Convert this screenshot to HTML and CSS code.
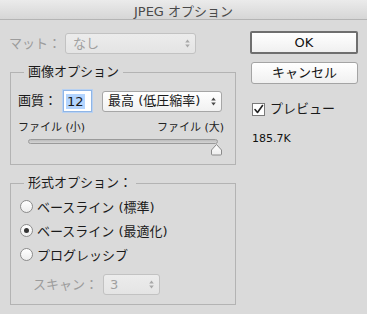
FILE: index.html
```html
<!DOCTYPE html>
<html lang="ja">
<head>
<meta charset="utf-8">
<title>JPEG オプション</title>
<link rel="stylesheet" href="styles.css">
</head>
<body>
<div class="window">
  <div class="titlebar">JPEG オプション</div>
  <div class="content">
    <div class="left">
      <div class="matte-row">
        <span class="lbl disabled">マット：</span>
        <div class="select disabled matte-select">
          <span>なし</span>
          <svg class="arrows" width="5" height="9" viewBox="0 0 5 9"><path d="M2.5 0.5 L4.8 3.5 H0.2 Z M2.5 8.5 L4.8 5.5 H0.2 Z"/></svg>
        </div>
      </div>

      <fieldset class="group g1">
        <legend>画像オプション</legend>
        <div class="quality-row">
          <span class="lbl q-lbl">画質：</span>
          <div class="num-input"><span class="sel">12</span></div>
          <div class="select q-select">
            <span>最高 (低圧縮率)</span>
            <svg class="arrows" width="5" height="9" viewBox="0 0 5 9"><path d="M2.5 0.5 L4.8 3.5 H0.2 Z M2.5 8.5 L4.8 5.5 H0.2 Z"/></svg>
          </div>
        </div>
        <div class="slider-labels"><span>ファイル (小)</span><span>ファイル (大)</span></div>
        <div class="slider">
          <div class="track"></div>
          <svg class="thumb" width="13" height="13" viewBox="0 0 13 13">
            <defs><linearGradient id="tg" x1="0" y1="0" x2="0" y2="1"><stop offset="0" stop-color="#ffffff"/><stop offset="1" stop-color="#ececec"/></linearGradient></defs>
            <path d="M1.5 11 V7 L6.5 1.5 L11.5 7 V11 Q11.5 12 10.5 12 H2.5 Q1.5 12 1.5 11 Z" fill="url(#tg)" stroke="#8a8a8a" stroke-width="1"/>
          </svg>
        </div>
      </fieldset>

      <fieldset class="group g2">
        <legend>形式オプション：</legend>
        <div class="radio-row"><span class="radio"></span><span>ベースライン (標準)</span></div>
        <div class="radio-row"><span class="radio on"></span><span>ベースライン (最適化)</span></div>
        <div class="radio-row"><span class="radio"></span><span>プログレッシブ</span></div>
        <div class="scan-row">
          <span class="lbl disabled">スキャン：</span>
          <div class="select disabled scan-select">
            <span>3</span>
            <svg class="arrows" width="5" height="9" viewBox="0 0 5 9"><path d="M2.5 0.5 L4.8 3.5 H0.2 Z M2.5 8.5 L4.8 5.5 H0.2 Z"/></svg>
          </div>
        </div>
      </fieldset>
    </div>

    <div class="right">
      <div class="btn ok">OK</div>
      <div class="btn cancel">キャンセル</div>
      <div class="check-row">
        <span class="checkbox">
          <svg width="11" height="11" viewBox="0 0 11 11"><path d="M2 5.5 L4.5 8.5 L9.5 1.5" fill="none" stroke="#222" stroke-width="1.6" stroke-linecap="round" stroke-linejoin="round"/></svg>
        </span>
        <span>プレビュー</span>
      </div>
      <div class="size">185.7K</div>
    </div>
  </div>
</div>
</body>
</html>
```

FILE: styles.css
```css
* { box-sizing: border-box; }
html, body {
  margin: 0;
  padding: 0;
  width: 367px;
  height: 314px;
  overflow: hidden;
  background: #dadada;
}
body {
  font-family: "DejaVu Sans", "Noto Sans CJK JP", sans-serif;
  font-size: 13px;
  color: #1a1a1a;
}
.window {
  width: 367px;
  height: 314px;
  display: flex;
  flex-direction: column;
  background: #dadada;
}
.titlebar {
  height: 20px;
  line-height: 23px;
  text-align: center;
  color: #4a4a4a;
  font-size: 13px;
  background: linear-gradient(#ebebeb, #d6d6d6);
  border-bottom: 1px solid #b4b4b4;
  flex: none;
}
.content {
  display: flex;
  flex: 1;
}
.left {
  width: 236px;
  padding-left: 9px;
  display: flex;
  flex-direction: column;
}
.right {
  width: 108px;
  margin-left: 14px;
  padding-top: 11px;
  display: flex;
  flex-direction: column;
}

.lbl { line-height: 16px; white-space: nowrap; }
.disabled { color: #9c9c9c; }

.matte-row {
  margin-top: 13px;
  display: flex;
  align-items: center;
  gap: 0;
}
.matte-row .lbl { width: 56px; }

.select {
  position: relative;
  height: 21px;
  border: 1px solid #a6a6a6;
  border-radius: 3px;
  background: linear-gradient(#ffffff, #f1f1f1);
  display: flex;
  align-items: center;
  padding-left: 5px;
  line-height: 16px;
  white-space: nowrap;
}
.select .arrows {
  position: absolute;
  right: 5px;
  top: 5px;
  fill: #4a4a4a;
}
.select.disabled {
  border-color: #c2c2c2;
  background: linear-gradient(#ececec, #e4e4e4);
  color: #a0a0a0;
}
.select.disabled .arrows { fill: #a8a8a8; }
.matte-select { width: 131px; padding-left: 7px; }

.group {
  margin: 10px 0 0 1px;
  width: 226px;
  padding: 0;
  border: 1px solid #b3b3b3;
  border-radius: 0;
  min-width: 0;
}
.group legend {
  margin-left: 13px;
  padding: 0 4px;
  line-height: 16px;
  font-size: 13px;
}

.quality-row {
  margin-top: 10px;
  padding-left: 7px;
  display: flex;
  align-items: center;
}
.q-lbl { width: 45px; }
.num-input {
  width: 29px;
  height: 22px;
  background: #fff;
  border: 1px solid #8fb5e6;
  box-shadow: 0 0 0 1px #b8d1f1;
  display: flex;
  align-items: center;
  padding-left: 2px;
}
.num-input .sel {
  background: #b4d5fe;
  line-height: 15px;
  padding: 0 1px;
}
.q-select {
  width: 120px;
  margin-left: 10px;
}

.slider-labels {
  margin-top: 9px;
  padding: 0 11px 0 7px;
  display: flex;
  justify-content: space-between;
  font-size: 11px;
  line-height: 14px;
  color: #222;
}
.slider {
  position: relative;
  margin-left: 17px;
  width: 195px;
  height: 18px;
}
.track {
  margin-top: 4px;
  width: 190px;
  height: 5px;
  border: 1px solid #9a9a9a;
  border-radius: 3px;
  background: linear-gradient(#bdbdbd, #d4d4d4);
}
.thumb {
  position: absolute;
  left: 182px;
  top: 4px;
}
.g1 { padding-bottom: 7px; }

.g2 { margin-top: 10px; padding-top: 3px; padding-bottom: 9px; }
.radio-row {
  height: 24px;
  display: flex;
  align-items: center;
  padding-left: 9px;
  gap: 4px;
  white-space: nowrap;
}
.radio {
  width: 13px;
  height: 13px;
  border-radius: 50%;
  border: 1px solid #8c8c8c;
  background: linear-gradient(#ffffff, #ededed);
  display: flex;
  align-items: center;
  justify-content: center;
  flex: none;
}
.radio.on::after {
  content: "";
  width: 5px;
  height: 5px;
  border-radius: 50%;
  background: #333;
}
.scan-row {
  margin-top: 8px;
  padding-left: 22px;
  display: flex;
  align-items: center;
}
.scan-row .lbl { width: 70px; }
.scan-select { width: 57px; padding-left: 6px; }

.btn {
  display: flex;
  align-items: center;
  justify-content: center;
  border: 1px solid #a4a4a4;
  border-radius: 3px;
  background: linear-gradient(#ffffff, #f0f0f0);
  color: #111;
  font-size: 13px;
  line-height: 16px;
}
.ok {
  height: 23px;
  border: 2px solid #6f6f6f;
  border-radius: 2px;
}
.cancel {
  height: 22px;
  margin-top: 8px;
  margin-left: 1px;
}
.check-row {
  margin-top: 17px;
  padding-left: 2px;
  display: flex;
  align-items: center;
  gap: 5px;
  line-height: 16px;
}
.checkbox {
  width: 13px;
  height: 13px;
  border: 1px solid #7a7a7a;
  background: #fff;
  display: flex;
  align-items: center;
  justify-content: center;
  flex: none;
}
.size {
  margin-top: 15px;
  padding-left: 2px;
  font-size: 11px;
  line-height: 14px;
  color: #111;
}
```
